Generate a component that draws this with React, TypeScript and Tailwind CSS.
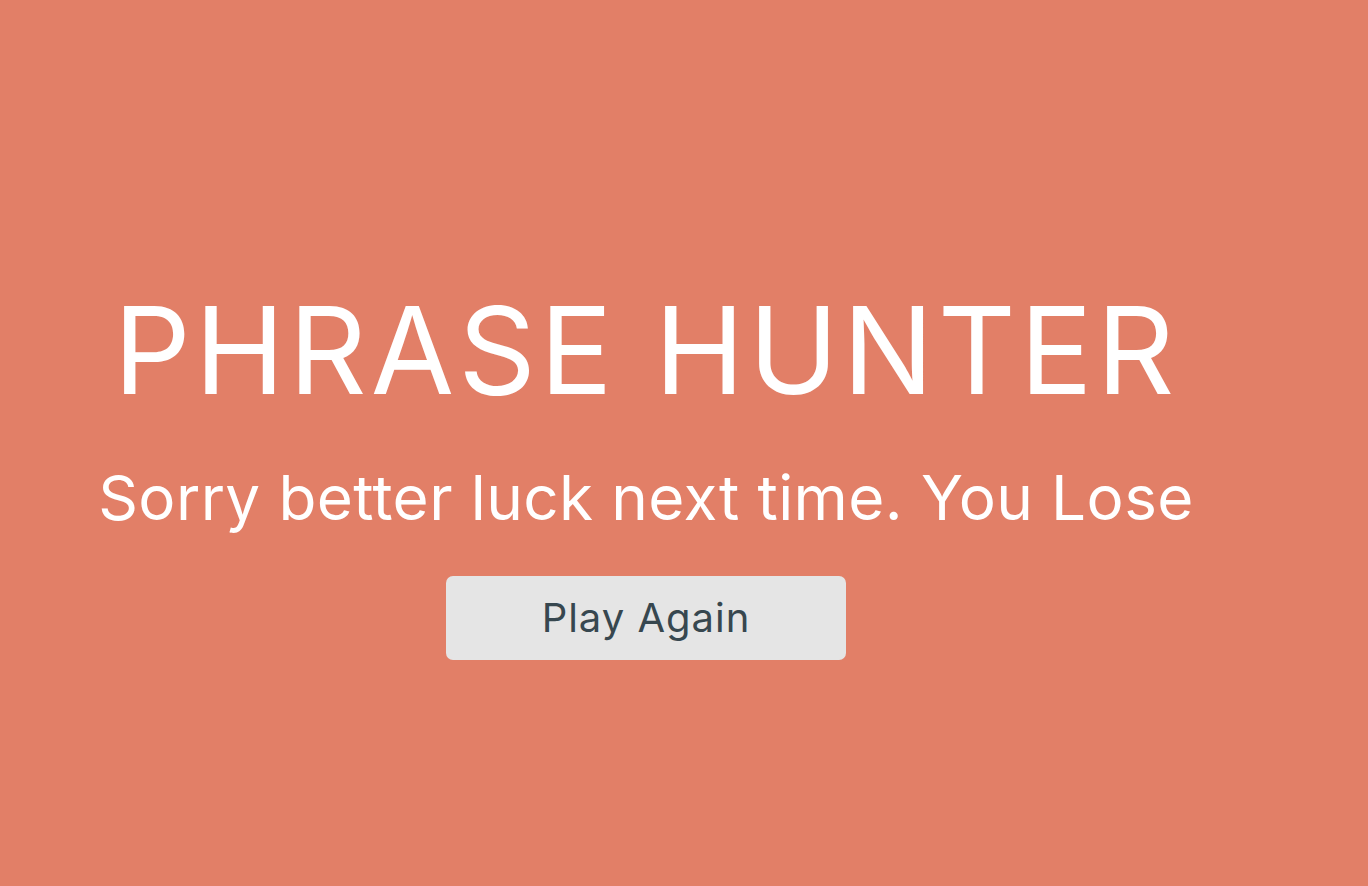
export default function App() {
  return (
    <div className="min-h-[886px] w-full bg-[#e27f67] flex flex-col items-center pr-[76px] font-['Inter',sans-serif]">
      <h1 className="mt-[275px] text-[121px] leading-[150px] tracking-[4px] font-normal text-white">
        PHRASE HUNTER
      </h1>
      <h2 className="mt-[33px] text-[62px] leading-[80px] tracking-[0.4px] text-white">
        Sorry better luck next time. You Lose
      </h2>
      <button className="mt-[38px] w-[400px] h-[84px] rounded-[7px] bg-[#e5e5e5] text-[#37474f] text-[40px] tracking-[1px] cursor-pointer">
        Play Again
      </button>
    </div>
  )
}
